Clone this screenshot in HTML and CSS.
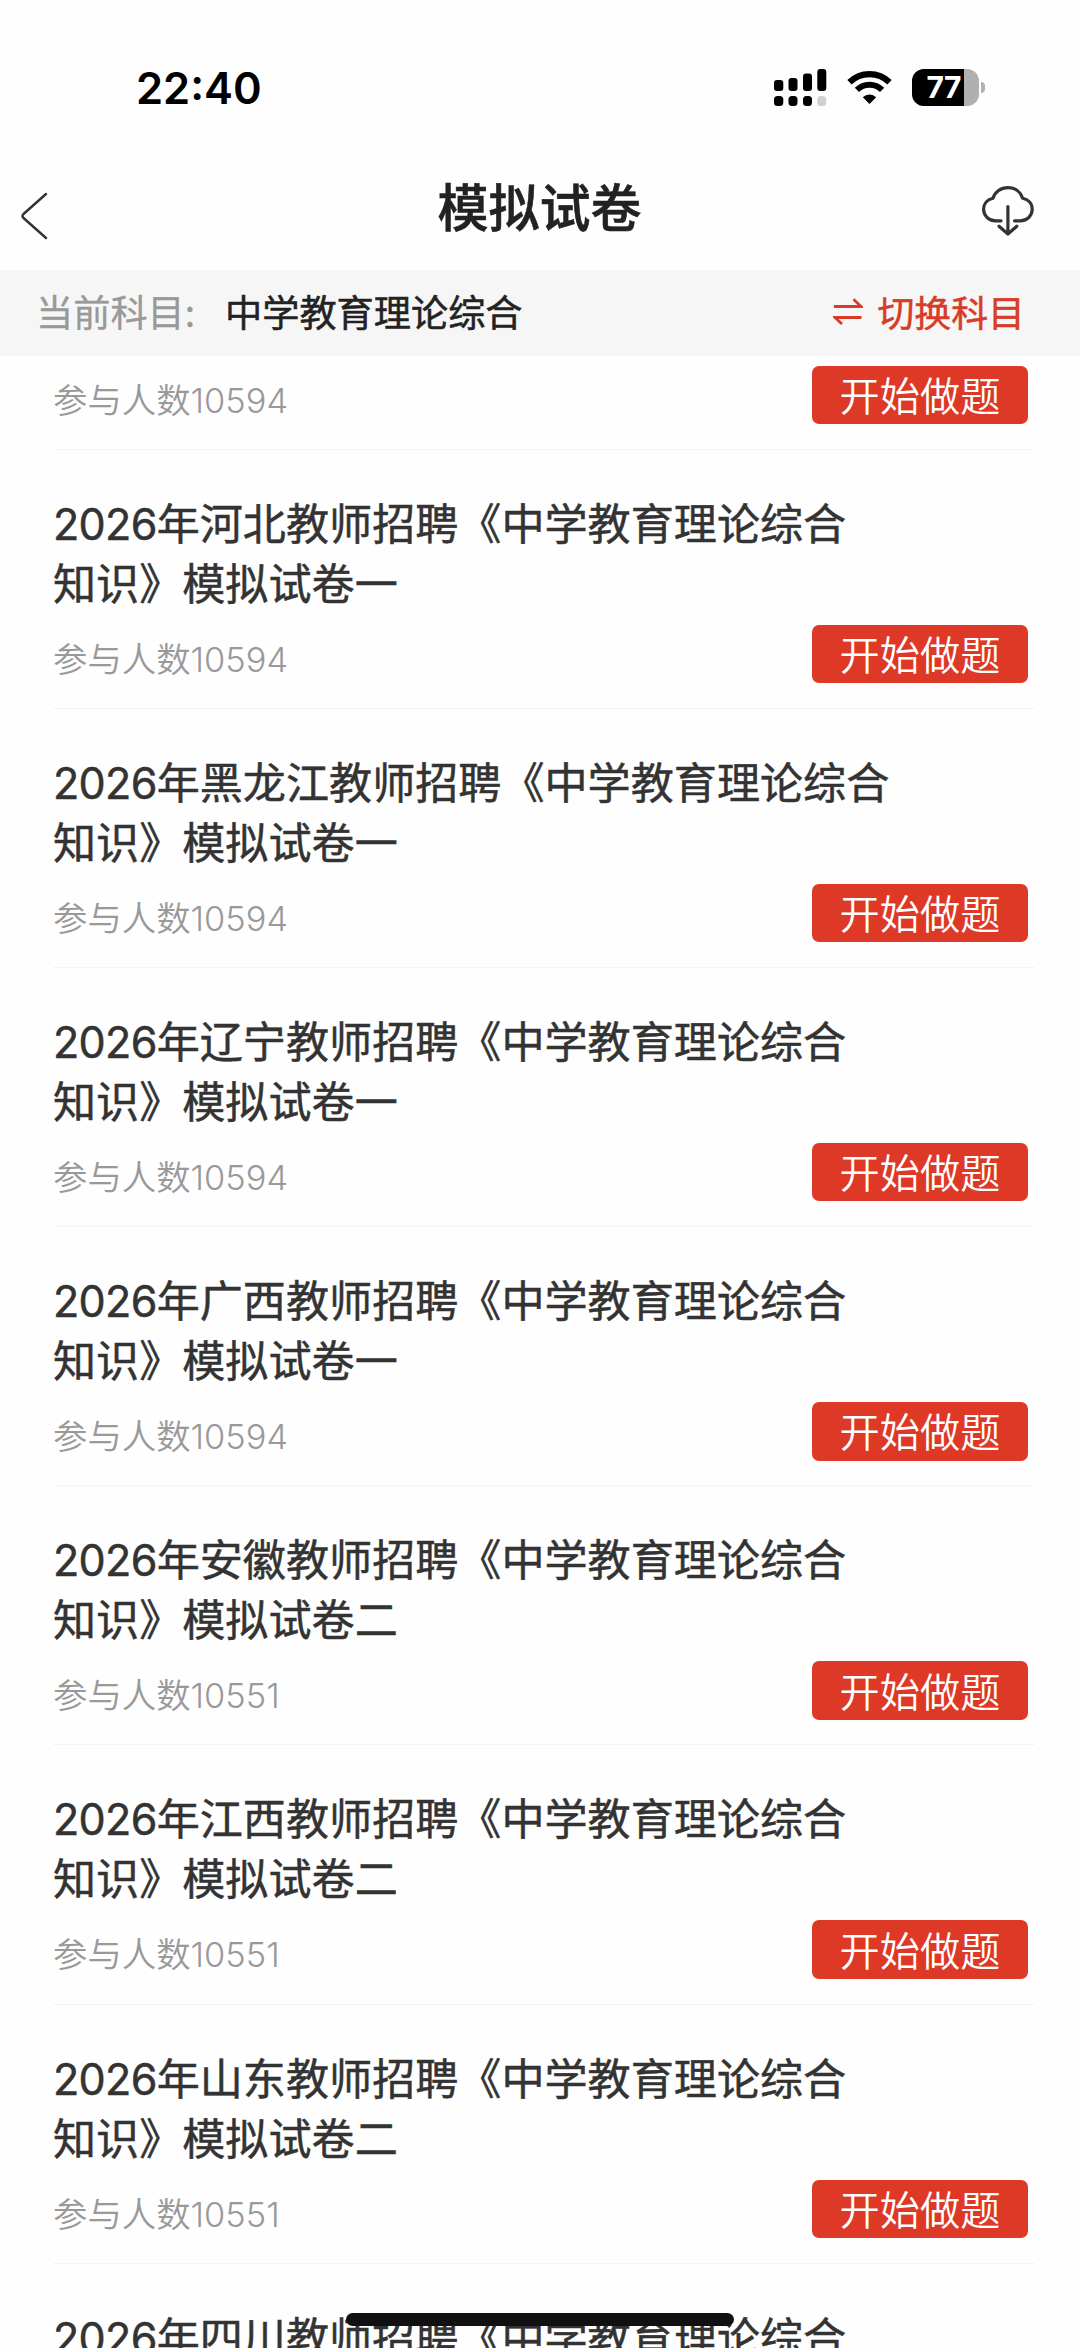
FILE: index.html
```html
<!DOCTYPE html>
<html lang="zh-CN">
<head>
    <meta charset="UTF-8">
    <meta name="viewport" content="width=device-width, initial-scale=1.0">
    <title>模拟试卷</title>
    <link rel="stylesheet" href="styles.css">
</head>
<body>
    <div class="status-bar">
        <span class="time">22:40</span>
        <div class="status-icons">
            <svg class="signal" viewBox="0 0 53 37">
                <rect x="0" y="11" width="9.3" height="11" rx="3"/>
                <rect x="14.5" y="9" width="9" height="13" rx="3"/>
                <rect x="29" y="4.5" width="9" height="17.5" rx="3"/>
                <rect x="43.3" y="0" width="9" height="22" rx="3"/>
                <rect x="0" y="27" width="9.3" height="10" rx="3.5"/>
                <rect x="14.5" y="27" width="9" height="10" rx="3.5"/>
                <rect x="29" y="27" width="9" height="10" rx="3.5"/>
                <rect x="43.3" y="27" width="9" height="10" rx="3.5" fill="#d0d0d0"/>
            </svg>
            <svg class="wifi" viewBox="0 0 45 33">
                <path d="M2.5 11.3 A28.5 28.5 0 0 1 42.5 11.3" fill="none" stroke="#000" stroke-width="6.2"/>
                <path d="M9.9 18.9 A18 18 0 0 1 35.1 18.9" fill="none" stroke="#000" stroke-width="6"/>
                <path d="M22.5 33 L15.8 26.2 A9.6 9.6 0 0 1 29.2 26.2 Z"/>
            </svg>
            <div class="battery">
                <span class="battery-level">77</span>
            </div>
            <span class="battery-tip"></span>
        </div>
    </div>

    <header class="nav-bar">
        <svg class="back" viewBox="0 0 28 48">
            <path d="M26 2 L3.5 22 Q1.5 24 3.5 26 L26 46"/>
        </svg>
        <h1>模拟试卷</h1>
        <svg class="download" viewBox="0 0 52 50">
            <path d="M19 34.8 H13.5 C6.5 34.8 1.6 29.5 1.6 23.3 C1.6 17.5 5.5 13.3 11 12.2 C13 5.8 18.8 1.6 25.9 1.6 C33 1.6 38.6 5.8 40.7 12.2 C46.3 13.3 50.2 17.5 50.2 23.3 C50.2 29.5 45.3 34.8 38.3 34.8 H32.5"/>
            <path d="M25.9 20.5 V47.5 M17 40.3 L25.9 48 L34.8 40.3"/>
        </svg>
    </header>

    <div class="subject-bar">
        <span class="subject-label">当前科目:</span>
        <span class="subject-name">中学教育理论综合</span>
        <a class="switch">
            <svg viewBox="0 0 30 27">
                <path d="M1 8.5 H28 L20.5 1.2 M28.5 19.5 H2 L9 26"/>
            </svg>
            切换科目
        </a>
    </div>

    <div class="list">
        <div class="item item-first">
            <div class="item-row"><span class="count">参与人数<i>10594</i></span><button>开始做题</button></div>
        </div>
        <div class="item">
            <h2><i>2026</i>年河北教师招聘《中学教育理论综合<br>知识》模拟试卷一</h2>
            <div class="item-row"><span class="count">参与人数<i>10594</i></span><button>开始做题</button></div>
        </div>
        <div class="item">
            <h2><i>2026</i>年黑龙江教师招聘《中学教育理论综合<br>知识》模拟试卷一</h2>
            <div class="item-row"><span class="count">参与人数<i>10594</i></span><button>开始做题</button></div>
        </div>
        <div class="item">
            <h2><i>2026</i>年辽宁教师招聘《中学教育理论综合<br>知识》模拟试卷一</h2>
            <div class="item-row"><span class="count">参与人数<i>10594</i></span><button>开始做题</button></div>
        </div>
        <div class="item">
            <h2><i>2026</i>年广西教师招聘《中学教育理论综合<br>知识》模拟试卷一</h2>
            <div class="item-row"><span class="count">参与人数<i>10594</i></span><button>开始做题</button></div>
        </div>
        <div class="item">
            <h2><i>2026</i>年安徽教师招聘《中学教育理论综合<br>知识》模拟试卷二</h2>
            <div class="item-row"><span class="count">参与人数<i>10551</i></span><button>开始做题</button></div>
        </div>
        <div class="item">
            <h2><i>2026</i>年江西教师招聘《中学教育理论综合<br>知识》模拟试卷二</h2>
            <div class="item-row"><span class="count">参与人数<i>10551</i></span><button>开始做题</button></div>
        </div>
        <div class="item">
            <h2><i>2026</i>年山东教师招聘《中学教育理论综合<br>知识》模拟试卷二</h2>
            <div class="item-row"><span class="count">参与人数<i>10551</i></span><button>开始做题</button></div>
        </div>
        <div class="item">
            <h2><i>2026</i>年四川教师招聘《中学教育理论综合</h2>
        </div>
    </div>

    <div class="home-indicator"></div>
</body>
</html>
```
FILE: styles.css
```css
* {
    box-sizing: border-box;
}
body {
    margin: 0;
    height: 2348px;
    overflow: hidden;
    display: flex;
    flex-direction: column;
    background: #fefefe;
    font-family: "Noto Sans CJK SC", sans-serif;
    color: #333;
}
i {
    font-family: Inter, sans-serif;
    font-style: normal;
    line-height: 1;
}
.status-bar {
    flex: none;
    height: 160px;
    padding: 0 95px 0 136px;
    display: flex;
    justify-content: space-between;
    align-items: flex-start;
}
.time {
    margin-top: 60px;
    font: 600 43.5px/56px Inter, sans-serif;
    color: #000;
}
.status-icons {
    display: flex;
    align-items: center;
    margin-top: 69px;
    height: 37px;
}
.signal {
    width: 53px;
    height: 37px;
    margin-right: 20px;
}
.wifi {
    width: 45px;
    height: 33px;
    margin-right: 20px;
}
.battery {
    width: 67px;
    height: 37px;
    border-radius: 12px;
    overflow: hidden;
    background: #b0b0b0;
}
.battery-level {
    display: block;
    width: 52px;
    height: 37px;
    padding-right: 3px;
    background: #000;
    color: #fff;
    font: 700 30px/37px Inter, sans-serif;
    letter-spacing: -0.5px;
    text-align: right;
}
.battery-tip {
    width: 4px;
    height: 11px;
    margin-left: 2px;
    border-radius: 0 5px 5px 0;
    background: #b0b0b0;
}
.nav-bar {
    flex: none;
    height: 110px;
    padding: 0 46px 0 20px;
    display: flex;
    justify-content: space-between;
    align-items: flex-start;
}
.nav-bar h1 {
    margin: 9px 0 0 49px;
    font-size: 51px;
    line-height: 72px;
    font-weight: 500;
    color: #222;
    -webkit-text-stroke: 0.6px #222;
}
.nav-bar svg {
    fill: none;
    stroke: #333;
    stroke-linecap: round;
    stroke-linejoin: round;
}
.back {
    width: 28px;
    height: 48px;
    margin-top: 32px;
    stroke-width: 2.4;
}
.download {
    width: 52px;
    height: 50px;
    margin-top: 26px;
    stroke-width: 3.2;
}
.subject-bar {
    flex: none;
    height: 86px;
    padding: 0 55px 4px 36px;
    display: flex;
    align-items: center;
    background: #f6f6f6;
    font-size: 37.2px;
    line-height: 54px;
}
.subject-label {
    width: 189px;
    color: #999;
    -webkit-text-stroke: 0.3px #999;
}
.subject-name {
    color: #222;
    -webkit-text-stroke: 0.5px #222;
}
.switch {
    margin-left: auto;
    display: flex;
    align-items: center;
    gap: 14px;
    font-size: 36.9px;
    color: #d83c29;
    -webkit-text-stroke: 0.5px #d83c29;
}
.switch svg {
    width: 30px;
    height: 27px;
    fill: none;
    stroke: #d83c29;
    stroke-width: 2.8;
}
.list {
    flex: 1;
    min-height: 0;
    overflow: hidden;
    padding: 0 45px 0 53px;
}
.item {
    height: 259.2px;
    padding-top: 41px;
    border-bottom: 1px solid #f4f4f4;
}
.item-first {
    height: 93.5px;
    padding-top: 0;
}
.item h2 {
    margin: 0 0 14px;
    font-size: 43.1px;
    line-height: 60px;
    font-weight: 400;
    -webkit-text-stroke: 0.5px #333;
    white-space: nowrap;
}
.item h2 i {
    letter-spacing: -0.7px;
}
.item-row {
    display: flex;
    justify-content: space-between;
    padding-right: 7px;
}
.item-first .item-row {
    padding-top: 9.5px;
}
.count {
    padding-top: 7px;
    font-size: 34.4px;
    line-height: 50px;
    font-weight: 350;
    color: #999;
}
.count i {
    font-weight: 300;
}
button {
    width: 216px;
    height: 58.5px;
    padding: 0 0 3px;
    border: none;
    border-radius: 7px;
    background: #de3926;
    color: #fff;
    font-family: inherit;
    font-size: 40.2px;
    line-height: 55px;
    font-weight: 350;
}
.home-indicator {
    position: absolute;
    left: 346px;
    top: 2313px;
    width: 388px;
    height: 13px;
    border-radius: 7px;
    background: #111;
}
```
